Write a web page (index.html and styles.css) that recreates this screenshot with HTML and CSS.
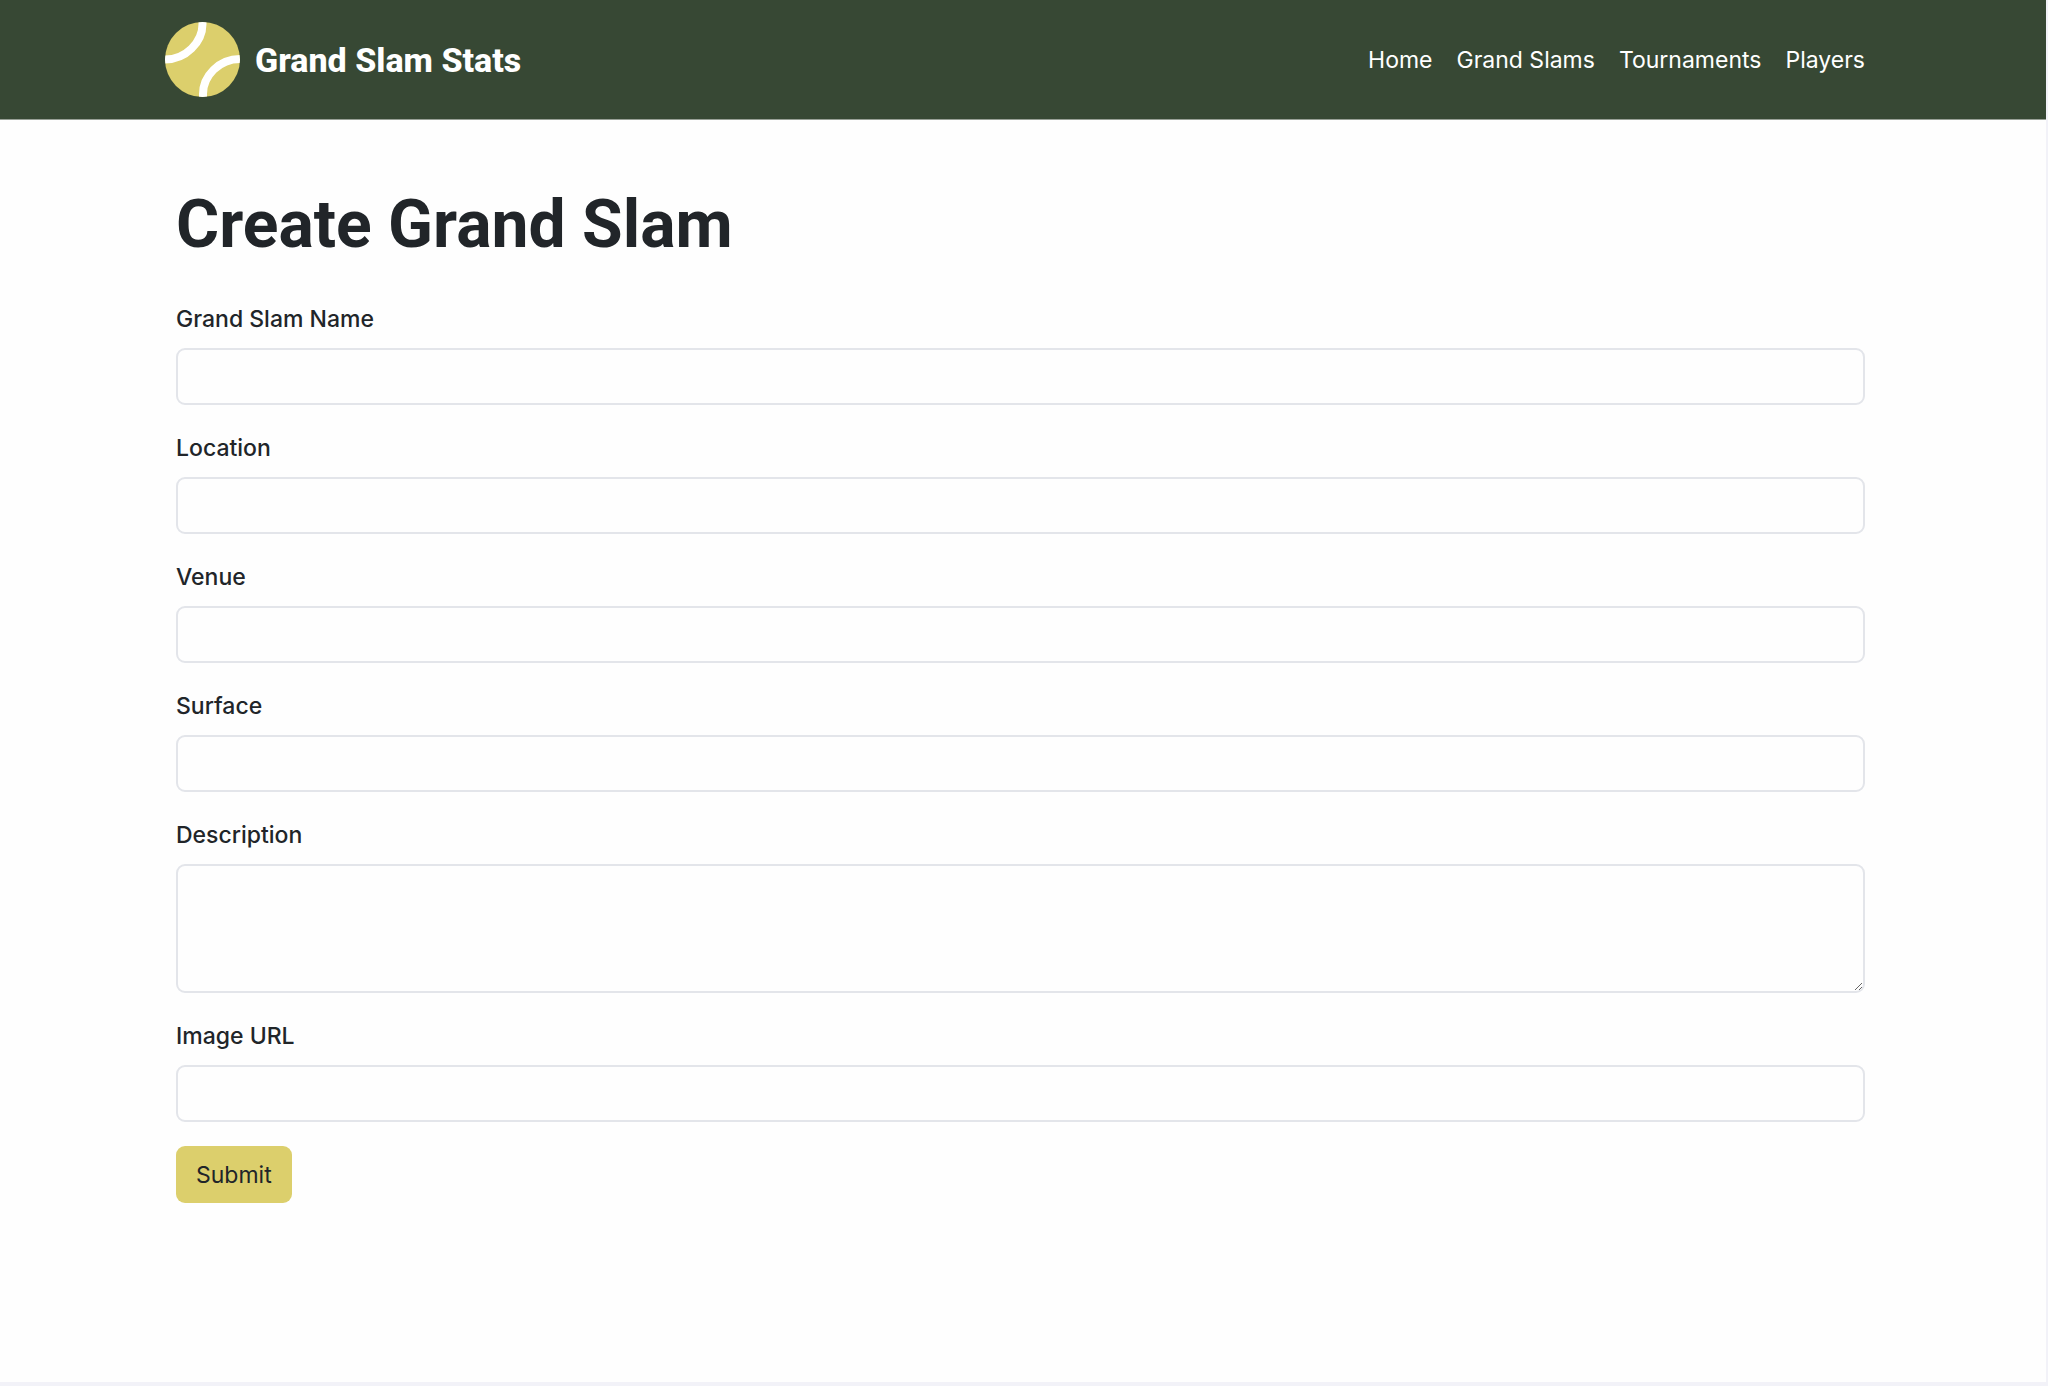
FILE: index.html
```
<!DOCTYPE html>
<html lang="en">
<head>
    <meta charset="UTF-8">
    <meta name="viewport" content="width=device-width, initial-scale=1.0">
    <title>Grand Slam Stats - Create Grand Slam</title>
    <link rel="stylesheet" href="styles.css">
</head>
<body>

<div class="page">
    <!-- Navbar -->
    <header class="navbar">
        <div class="container navbar-inner">
            <a class="brand" href="#">
                <svg class="brand-logo" viewBox="0 0 75 75" aria-hidden="true">
                    <defs>
                        <clipPath id="ball"><circle cx="37.5" cy="37.5" r="37.5"/></clipPath>
                    </defs>
                    <g clip-path="url(#ball)">
                        <rect width="75" height="75" fill="#dccf6c"/>
                        <path d="M37.5 -2 V2 C37.5 20 21 37.5 0 37.5 H-2" fill="none" stroke="#fff" stroke-width="8"/>
                        <path d="M77 37 H75 C54 37 38 54 38 72 V77" fill="none" stroke="#fff" stroke-width="8"/>
                    </g>
                </svg>
                <span class="brand-name">Grand Slam Stats</span>
            </a>
            <nav class="nav-links">
                <a href="#">Home</a>
                <a href="#">Grand Slams</a>
                <a href="#">Tournaments</a>
                <a href="#">Players</a>
            </nav>
        </div>
    </header>

    <!-- Form -->
    <main class="container content">
        <h1>Create Grand Slam</h1>
        <form action="#" method="POST">
            <div class="form-group">
                <label for="name">Grand Slam Name</label>
                <input type="text" id="name" name="name">
            </div>
            <div class="form-group">
                <label for="location">Location</label>
                <input type="text" id="location" name="location">
            </div>
            <div class="form-group">
                <label for="venue">Venue</label>
                <input type="text" id="venue" name="venue">
            </div>
            <div class="form-group">
                <label for="surface">Surface</label>
                <input type="text" id="surface" name="surface">
            </div>
            <div class="form-group">
                <label for="description">Description</label>
                <textarea id="description" name="description" rows="3"></textarea>
            </div>
            <div class="form-group">
                <label for="image-url">Image URL</label>
                <input type="text" id="image-url" name="image-url">
            </div>
            <button type="submit" class="submit-button">Submit</button>
        </form>
    </main>
</div>

</body>
</html>
```
FILE: styles.css
```
* {
    box-sizing: border-box;
}
html {
    background-color: #f2f2f8;
}
body {
    font-family: Inter, 'Liberation Sans', sans-serif;
    font-size: 23px;
    line-height: 36px;
    color: #212529;
    margin: 0;
    padding: 0 2px 4px 0;
}
.page {
    min-height: calc(100vh - 4px);
    background-color: #fefefe;
}
.container {
    width: 100%;
    max-width: 1716px;
    margin: 0 auto;
}

/* Navbar */
.navbar {
    background-color: #374834;
    border-bottom: 1px solid #98a096;
}
.navbar-inner {
    display: flex;
    align-items: center;
    justify-content: space-between;
    padding: 22px 16px 22px 0;
}
.brand {
    display: flex;
    align-items: center;
    gap: 15px;
    color: #fff;
    text-decoration: none;
}
.brand-logo {
    width: 75px;
    height: 75px;
}
.brand-name {
    font-family: Roboto, 'Liberation Sans', sans-serif;
    font-size: 34px;
    font-weight: 800;
}
.nav-links {
    display: flex;
    gap: 24px;
}
.nav-links a {
    color: #fff;
    text-decoration: none;
}

/* Form */
.content {
    padding: 63px 16px 60px 11px;
}
h1 {
    font-family: Roboto, 'Liberation Sans', sans-serif;
    font-size: 66px;
    line-height: 84px;
    font-weight: 700;
    margin: 0 0 34px;
}
.form-group {
    margin-bottom: 24px;
}
.form-group + .form-group {
    padding-top: 1px;
}
label {
    display: block;
    font-weight: 500;
    margin-bottom: 11px;
}
input,
textarea {
    display: block;
    width: 100%;
    height: 57px;
    padding: 8px 18px;
    font: inherit;
    color: inherit;
    background-color: #fefefe;
    border: 2px solid #e3e5ea;
    border-radius: 9px;
}
textarea {
    height: 129px;
    resize: vertical;
}
input:focus,
textarea:focus {
    outline: none;
    border-color: #dccf6c;
}
.submit-button {
    display: block;
    height: 57px;
    padding: 0 20px;
    font: inherit;
    color: inherit;
    background-color: #dccf6c;
    border: none;
    border-radius: 9px;
    cursor: pointer;
}
.submit-button:hover {
    background-color: #cfc25c;
}
```
